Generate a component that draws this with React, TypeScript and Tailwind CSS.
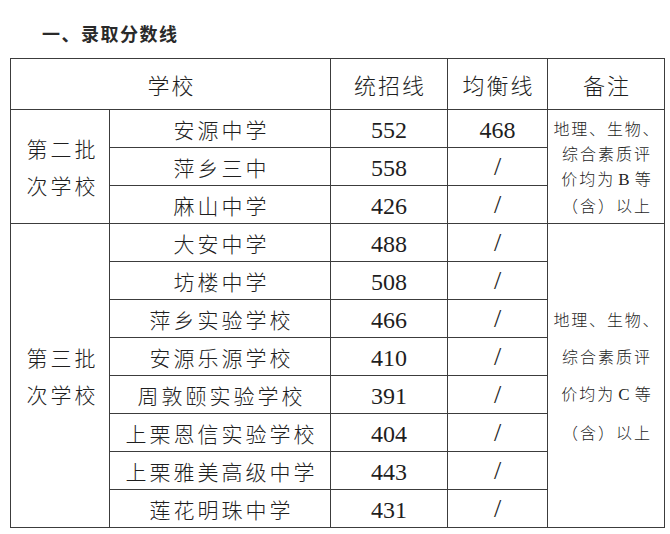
import React from "react"

const cjk = "font-['Noto_Sans_CJK_SC',sans-serif]"
const num = "font-['Liberation_Serif','Times_New_Roman',serif]"

const batch2 = [
  { name: "安源中学", total: "552", balance: "468" },
  { name: "萍乡三中", total: "558", balance: "/" },
  { name: "麻山中学", total: "426", balance: "/" },
]

const batch3 = [
  { name: "大安中学", total: "488", balance: "/" },
  { name: "坊楼中学", total: "508", balance: "/" },
  { name: "萍乡实验学校", total: "466", balance: "/" },
  { name: "安源乐源学校", total: "410", balance: "/" },
  { name: "周敦颐实验学校", total: "391", balance: "/" },
  { name: "上栗恩信实验学校", total: "404", balance: "/" },
  { name: "上栗雅美高级中学", total: "443", balance: "/" },
  { name: "莲花明珠中学", total: "431", balance: "/" },
]

const cell = "border border-[#3c3c3c] p-0 text-center align-middle"

function Note({ grade, gap }: { grade: string; gap: string }) {
  return (
    <div className={`flex flex-col items-center ${gap} text-[16px] leading-[20px] font-light ${cjk}`}>
      <div className="tracking-[1.8px] pl-[1.8px]">地理、生物、</div>
      <div className="tracking-[2px] pl-[2px]">综合素质评</div>
      <div className="tracking-[2px] pl-[2px]">
        价均为<span className={`${num} text-[17px] mx-[3px]`}>{grade}</span>等
      </div>
      <div className="tracking-[2px] pl-[2px]">（含）以上</div>
    </div>
  )
}

function Row({
  school,
  first,
  group,
  note,
}: {
  school: { name: string; total: string; balance: string }
  first?: boolean
  group?: { label: string[]; span: number }
  note?: React.ReactNode
}) {
  return (
    <tr className="h-[38px]">
      {first && group && (
        <td rowSpan={group.span} className={cell}>
          <div className={`text-[21px] leading-[37px] font-light tracking-[3px] pl-[5px] ${cjk}`}>
            {group.label.map((t) => (
              <div key={t}>{t}</div>
            ))}
          </div>
        </td>
      )}
      <td className={cell}>
        <span className={`text-[21px] leading-[36px] font-light tracking-[3px] pl-[3px] ${cjk}`}>{school.name}</span>
      </td>
      <td className={cell}>
        <span className={`relative top-[1px] text-[24px] leading-[36px] ${num}`}>{school.total}</span>
      </td>
      <td className={cell}>
        {school.balance === "/" ? (
          <span className={`text-[26px] leading-[36px] font-light ${num}`}>/</span>
        ) : (
          <span className={`relative top-[1px] text-[24px] leading-[36px] ${num}`}>{school.balance}</span>
        )}
      </td>
      {first && note && (
        <td rowSpan={group?.span} className={cell}>
          {note}
        </td>
      )}
    </tr>
  )
}

export default function App() {
  return (
    <div className="w-[670px] h-[534px] bg-white text-[#1e1e1e] overflow-hidden">
      <div className={`pt-[21px] pl-[42px] text-[18px] leading-[24px] font-bold text-[#2a2a2a] tracking-[1.5px] ${cjk}`}>
        一、录取分数线
      </div>
      <table className="mt-[13px] ml-[10px] w-[654px] table-fixed border-collapse">
        <colgroup>
          <col className="w-[99px]" />
          <col className="w-[221px]" />
          <col className="w-[117px]" />
          <col className="w-[100px]" />
          <col className="w-[117px]" />
        </colgroup>
        <thead>
          <tr className="h-[51px]">
            {[
              { t: "学校", span: 2 },
              { t: "统招线", span: 1 },
              { t: "均衡线", span: 1 },
              { t: "备注", span: 1 },
            ].map((h) => (
              <th key={h.t} colSpan={h.span} className={`${cell} font-normal`}>
                <span className={`text-[22px] leading-[50px] font-light tracking-[2px] pl-[2px] ${cjk}`}>{h.t}</span>
              </th>
            ))}
          </tr>
        </thead>
        <tbody>
          {batch2.map((s, i) => (
            <Row
              key={s.name}
              school={s}
              first={i === 0}
              group={{ label: ["第二批", "次学校"], span: batch2.length }}
              note={<Note grade="B" gap="gap-[5px]" />}
            />
          ))}
          {batch3.map((s, i) => (
            <Row
              key={s.name}
              school={s}
              first={i === 0}
              group={{ label: ["第三批", "次学校"], span: batch3.length }}
              note={<Note grade="C" gap="gap-[17px]" />}
            />
          ))}
        </tbody>
      </table>
    </div>
  )
}
